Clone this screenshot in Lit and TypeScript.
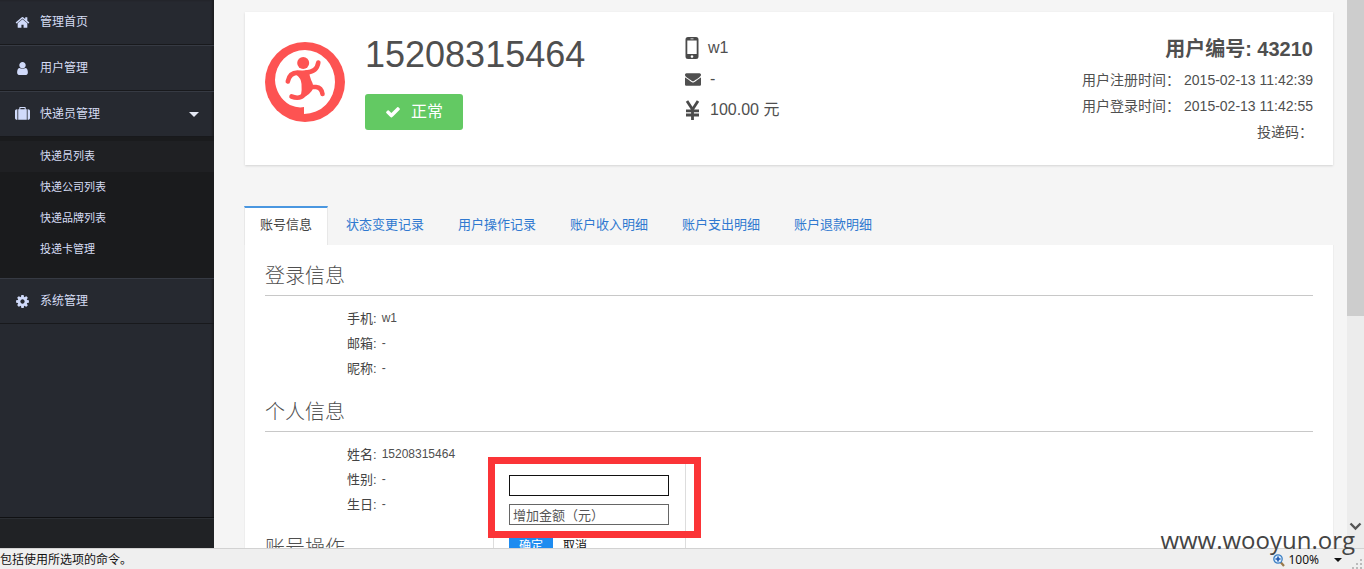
import { LitElement, html, css, svg } from "lit";
import { customElement, property, state } from "lit/decorators.js";

const ICONS: Record<string, string> = {
  home: "M1472 992v480q0 26-19 45t-45 19h-384v-384h-256v384h-384q-26 0-45-19t-19-45v-480q0-1 .5-3t.5-3l575-474 575 474q1 2 1 6zm223-69l-62 74q-8 9-21 11h-3q-13 0-21-7l-692-577-692 577q-12 8-24 7-13-2-21-11l-62-74q-8-10-7-23.5t11-21.5l719-599q32-26 76-26t76 26l244 204v-195q0-14 9-23t23-9h192q14 0 23 9t9 23v408l219 182q10 8 11 21.5t-7 23.5z",
  user: "M1536 1399q0 109-62.5 187t-150.5 78h-854q-88 0-150.5-78t-62.5-187q0-85 8.5-160.5t31.5-152 58.5-131 94-89 134.5-34.5q131 128 313 128t313-128q76 0 134.5 34.5t94 89 58.5 131 31.5 152 8.5 160.5zm-256-887q0 159-112.5 271.5t-271.5 112.5-271.5-112.5-112.5-271.5 112.5-271.5 271.5-112.5 271.5 112.5 112.5 271.5z",
  suitcase: "M640 256h512v-128h-512v128zm-352 0v1280h-64q-92 0-158-66t-66-158v-832q0-92 66-158t158-66h64zm1120 0v1280h-1024v-1280h128v-160q0-40 28-68t68-28h576q40 0 68 28t28 68v160h128zm384 224v832q0 92-66 158t-158 66h-64v-1280h64q92 0 158 66t66 158z",
  cog: "M1152 896q0-106-75-181t-181-75-181 75-75 181 75 181 181 75 181-75 75-181zm512-109v222q0 12-8 23t-20 13l-185 28q-19 54-39 91 35 50 107 138 10 12 10 25t-9 23q-27 37-99 108t-94 71q-12 0-26-9l-138-108q-44 23-91 38-16 136-29 186-7 28-36 28h-222q-14 0-24.5-8.5t-11.5-21.5l-28-184q-49-16-90-37l-141 107q-10 9-25 9-14 0-25-11-126-114-165-168-7-10-7-23 0-12 8-23 15-21 51-66.5t54-70.5q-27-50-41-99l-183-27q-13-2-21-12.5t-8-23.5v-222q0-12 8-23t19-13l186-28q14-46 39-92-40-57-107-138-10-12-10-24 0-10 9-23 26-36 98.5-107.5t94.5-71.5q13 0 26 10l138 107q44-23 91-38 16-136 29-186 7-28 36-28h222q14 0 24.5 8.5t11.5 21.5l28 184q49 16 90 37l142-107q9-9 24-9 13 0 25 10 129 119 165 170 7 8 7 22 0 12-8 23-15 21-51 66.5t-54 70.5q26 50 41 98l183 28q13 2 21 12.5t8 23.5z",
  check: "M1671 566q0 40-28 68l-724 724-136 136q-28 28-68 28t-68-28l-136-136-362-362q-28-28-28-68t28-68l136-136q28-28 68-28t68 28l294 295 656-657q28-28 68-28t68 28l136 136q28 28 28 68z",
  envelope: "M1792 710v794q0 66-47 113t-113 47h-1472q-66 0-113-47t-47-113v-794q44 49 101 87 362 246 497 345 57 42 92.500 65.500t94.500 48 110 24.500h2q51 0 110-24.500t94.500-48 92.500-65.500q170-123 498-345 57-39 100-87zm0-294q0 79-49 151t-122 123q-376 261-468 325-10 7-42.500 30.500t-54 38-52 32.500-57.500 27-50 9h-2q-23 0-50-9t-57.500-27-52-32.500-54-38-42.500-30.500q-91-64-262-182.500t-205-142.500q-62-42-117-115.500t-55-136.500q0-78 41.500-130t118.500-52h1472q65 0 112.500 47t47.500 113z",
};

const fonts = css`"Liberation Sans", "Noto Sans CJK SC", sans-serif`;

function icon(name: string, cls = "icon") {
  return html`<svg class=${cls} viewBox="0 0 1792 1792" aria-hidden="true">
    ${svg`<path fill="currentColor" d=${ICONS[name]}></path>`}
  </svg>`;
}

@customElement("side-nav")
class SideNav extends LitElement {
  static styles = css`
    :host {
      display: flex;
      flex-direction: column;
      background: #262930;
      color: #d5dcf3;
      font: 12px/18px ${fonts};
      box-shadow: inset -2px 0 2px #1d1e21;
    }
    a {
      color: inherit;
      text-decoration: none;
    }
    .item {
      display: flex;
      align-items: center;
      gap: 10px;
      height: 44px;
      padding: 0 15px;
      border-top: 1px solid #363a43;
      border-bottom: 1px solid #18191c;
    }
    .item:first-child {
      border-top: 0;
    }
    .icon {
      width: 15px;
      height: 15px;
      color: #d0dafa;
    }
    .label {
      flex: 1;
    }
    .caret {
      border: 5px solid transparent;
      border-top-color: #e4e8f4;
      border-bottom: 0;
    }
    .sub {
      background: #1a1b1d;
      padding: 4px 0 13px;
      font-size: 11px;
    }
    .sub a {
      display: block;
      padding: 0 40px;
      line-height: 31px;
    }
    .sub a.current {
      background: #1f2023;
    }
    .foot {
      margin-top: auto;
      height: 30px;
      background: #202225;
      border-top: 1px solid #101113;
      box-shadow: inset 0 1px #2b2e33;
    }
  `;

  render() {
    return html`
      <a class="item" href="#">${icon("home")}<span class="label">管理首页</span></a>
      <a class="item" href="#">${icon("user")}<span class="label">用户管理</span></a>
      <a class="item" href="#">
        ${icon("suitcase")}<span class="label">快递员管理</span><span class="caret"></span>
      </a>
      <nav class="sub">
        ${["快递员列表", "快递公司列表", "快递品牌列表", "投递卡管理"].map(
          (t, i) => html`<a class=${i === 0 ? "current" : ""} href="#">${t}</a>`
        )}
      </nav>
      <a class="item" href="#">${icon("cog")}<span class="label">系统管理</span></a>
      <div class="foot"></div>
    `;
  }
}

@customElement("user-card")
class UserCard extends LitElement {
  static styles = css`
    :host {
      display: grid;
      grid-template-columns: 88px 1fr 1fr 1fr;
      column-gap: 12px;
      background: #fff;
      box-shadow: 0 1px 2px #d4d4d4;
      padding: 20px;
      color: #4f4f4f;
      font: 14px/26px ${fonts};
    }
    .logo {
      width: 80px;
      height: 80px;
      margin-top: 10px;
    }
    .phone {
      margin: 0;
      font-size: 36px;
      line-height: 46px;
      font-weight: 400;
    }
    .state {
      display: flex;
      align-items: center;
      gap: 10px;
      height: 36px;
      margin-top: 16px;
      padding: 0 20px;
      border: 0;
      border-radius: 3px;
      background: #63c963;
      color: #fff;
      font: 16px/20px ${fonts};
    }
    .tick {
      width: 16px;
      height: 16px;
    }
    .contact {
      margin: 0;
      padding: 0;
      list-style: none;
      font-size: 16px;
      line-height: 31px;
    }
    .contact li {
      display: flex;
      align-items: center;
      gap: 9px;
    }
    .glyph {
      width: 16px;
      height: 24px;
    }
    .mobile {
      width: 14px;
      height: 24px;
    }
    .facts {
      text-align: right;
    }
    .uid {
      margin: 0;
      padding-bottom: 1px;
      font-size: 20px;
      line-height: 34px;
    }
    .fact {
      display: flex;
      justify-content: flex-end;
      gap: 4px;
      margin: 0;
    }
  `;

  render() {
    return html`
      <svg class="logo" viewBox="0 0 80 80" aria-hidden="true">
        <circle cx="40" cy="40" r="40" fill="#fd5352" />
        <path d="M39 72 V65 Q33 66.500 25 63 A30 30 0 0 1 10 38 A30 30 0 0 1 40 8 A30.500 31.500 0 0 1 70 40 A31 32 0 0 1 39 72Z" fill="#fff" />
        <g fill="none" stroke="#fd5352" stroke-width="4.600" stroke-linecap="round" stroke-linejoin="round">
          <path d="M41 30.500 Q52 30 53.300 20.500" />
          <path d="M36 31 Q25 29 22.800 39.500" />
          <path d="M44 45 H51 Q56.500 45.500 57.500 52" />
          <path d="M42 47 Q38 59 26.500 54.500" />
        </g>
        <path d="M31.500 29 L44 28 Q44 34 47.500 41 Q50 47 44 52 Q38 57 36 53 Q37 48 36.500 42 Q36 36 31.500 33Z" fill="#fd5352" />
        <circle cx="38.200" cy="21" r="6" fill="#fd5352" />
      </svg>
      <div>
        <h1 class="phone">15208315464</h1>
        <button class="state" type="button">${icon("check", "tick")}正常</button>
      </div>
      <ul class="contact">
        <li>
          <svg class="mobile" viewBox="0 0 14 24" aria-hidden="true">
            <path fill="#4a4a4a" fill-rule="evenodd" d="M3 1h8a2.500 2.500 0 0 1 2.500 2.500v17A2.500 2.500 0 0 1 11 23H3a2.500 2.500 0 0 1-2.500-2.500v-17A2.500 2.500 0 0 1 3 1zM2.300 4.500v13.500h9.400V4.500zM5.500 2.400v.8h3v-.8zM7 19.200a1.300 1.300 0 1 0 .01 0z" />
          </svg>w1
        </li>
        <li>${icon("envelope", "glyph")}-</li>
        <li>
          <svg class="glyph" viewBox="0 0 16 24" aria-hidden="true">
            <path fill="none" stroke="#4a4a4a" stroke-width="2.800" d="M2 3 L7.500 11.500 L13 3 M7.500 11 V22 M1 12.800 H14 M1 17 H14" />
          </svg>100.00 元
        </li>
      </ul>
      <div class="facts">
        <h2 class="uid">用户编号: 43210</h2>
        <p class="fact"><span>用户注册时间：</span><span>2015-02-13 11:42:39</span></p>
        <p class="fact"><span>用户登录时间：</span><span>2015-02-13 11:42:55</span></p>
        <p class="fact"><span>投递码：</span></p>
      </div>
    `;
  }
}

@customElement("info-section")
class InfoSection extends LitElement {
  @property() heading = "";
  @property({ attribute: false }) rows: [string, string][] = [];

  static styles = css`
    :host {
      display: block;
      color: #4f4f4f;
      font: 12px/25px ${fonts};
    }
    .title {
      margin: 0;
      padding-top: 2px;
      font-size: 20px;
      line-height: 38px;
      font-weight: 300;
      border-bottom: 1px solid #c8c8c8;
    }
    .list {
      margin: 0;
      padding: 10px 0;
    }
    .row {
      display: flex;
      gap: 5px;
      padding-left: 82px;
    }
    dt {
      font-size: 13px;
      color: #444;
    }
    dd {
      margin: 0;
    }
  `;

  render() {
    return html`
      <h3 class="title">${this.heading}</h3>
      <dl class="list">
        ${this.rows.map(([k, v]) => html`<div class="row"><dt>${k}:</dt><dd>${v}</dd></div>`)}
      </dl>
    `;
  }
}

@customElement("amount-popup")
class AmountPopup extends LitElement {
  static styles = css`
    :host {
      display: block;
      box-sizing: border-box;
      width: 193px;
      padding: 14px 15px;
      background: #fff;
      border: 1px solid #ddd;
      font: 13px/18px ${fonts};
    }
    .field {
      display: block;
      box-sizing: border-box;
      width: 160px;
      height: 21px;
      margin: 0 0 8px;
      padding: 2px 3px 0;
      border: 1px solid #666;
      background: #fff;
      font: inherit;
      color: #333;
      outline: 0;
    }
    .active {
      border-color: #111;
    }
    .field::placeholder {
      color: #555;
      opacity: 1;
    }
    .actions {
      display: flex;
    }
    .btn {
      border: 0;
      height: 26px;
      padding: 0 10px;
      background: none;
      font: 12px/18px ${fonts};
      color: #111;
    }
    .ok {
      background: #1e8cf0;
      color: #fff;
    }
  `;

  render() {
    return html`
      <input class="field active" type="text" aria-label="账号" />
      <input class="field" type="text" aria-label="增加金额（元）" placeholder="增加金额（元）" />
      <div class="actions">
        <button class="btn ok" type="button">确定</button>
        <button class="btn" type="button">取消</button>
      </div>
    `;
  }
}

@customElement("app-root")
class AppRoot extends LitElement {
  @state() private active = 0;

  private tabs = ["账号信息", "状态变更记录", "用户操作记录", "账户收入明细", "账户支出明细", "账户退款明细"];

  static styles = css`
    :host {
      display: grid;
      grid-template-rows: minmax(0, 1fr) auto;
      height: 100vh;
      position: relative;
      overflow: hidden;
      background: #f5f5f5;
      font: 13px/18px ${fonts};
    }
    .window {
      display: grid;
      grid-template-columns: 214px minmax(0, 1fr) 17px;
      overflow: hidden;
    }
    .content {
      padding: 12px 14px 0 31px;
      overflow: hidden;
    }
    .tabs {
      display: flex;
      gap: 2px;
      margin: 41px 0 0 -1px;
    }
    .tab {
      padding: 0 15px 4px;
      border: 1px solid transparent;
      border-top-width: 2px;
      border-bottom: 0;
      line-height: 33px;
      color: #3079d0;
      text-decoration: none;
    }
    .tab.on {
      background: #fff;
      border-color: #4a97e0 #e8e8e8;
      color: #444;
    }
    .panel {
      position: relative;
      background: #fff;
      padding: 10px 20px;
      box-shadow: 0 0 1px #ccc;
      clip-path: inset(0 -2px -2px -2px);
    }
    .popup {
      position: absolute;
      left: 248px;
      top: 215px;
    }
    .frame {
      position: absolute;
      left: 243px;
      top: 212px;
      width: 199px;
      height: 67px;
      border: 7px solid #fb3437;
      pointer-events: none;
    }
    .scroll {
      display: flex;
      flex-direction: column;
      justify-content: space-between;
      background: #ececec;
    }
    .thumb {
      height: 316px;
      background: #cdcdcd;
    }
    .down {
      width: 13px;
      height: 9px;
      margin: 0 2px 17px;
    }
    .status {
      display: flex;
      align-items: center;
      height: 18px;
      padding-top: 2px;
      background: #efefef;
      border-top: 1px solid #d2d2d2;
      color: #111;
      font-size: 12px;
    }
    .message {
      flex: 1;
    }
    .zoom {
      display: flex;
      align-items: center;
      gap: 3px;
      font-family: "Noto Sans", sans-serif;
      font-size: 12px;
    }
    .lens {
      width: 12px;
      height: 13px;
    }
    .arrow {
      margin: 0 10px 0 15px;
      border: 4px solid transparent;
      border-top-color: #111;
      border-bottom: 0;
    }
    .grip {
      width: 10px;
      height: 10px;
      margin: 8px 2px 0 0;
    }
    .mark {
      position: absolute;
      right: 9px;
      bottom: 9px;
      font: 24px/40px "Open Sans", sans-serif;
      color: #444;
    }
  `;

  render() {
    return html`
      <div class="window">
        <side-nav></side-nav>
        <main class="content">
          <user-card></user-card>
          <nav class="tabs">
            ${this.tabs.map(
              (t, i) => html`<a
                class=${i === this.active ? "tab on" : "tab"}
                href="#"
                @click=${(e: Event) => {
                  e.preventDefault();
                  this.active = i;
                }}
                >${t}</a
              >`
            )}
          </nav>
          <section class="panel">
            <info-section heading="登录信息" .rows=${[["手机", "w1"], ["邮箱", "-"], ["昵称", "-"]]}></info-section>
            <info-section heading="个人信息" .rows=${[["姓名", "15208315464"], ["性别", "-"], ["生日", "-"]]}></info-section>
            <info-section heading="账号操作"></info-section>
            <amount-popup class="popup"></amount-popup>
            <div class="frame"></div>
          </section>
        </main>
        <div class="scroll">
          <div class="thumb"></div>
          <svg class="down" viewBox="0 0 13 9" aria-hidden="true">
            <path d="M1.500 1.500 L6.500 6.500 L11.500 1.500" fill="none" stroke="#555" stroke-width="2.400" />
          </svg>
        </div>
      </div>
      <footer class="status">
        <span class="message">包括使用所选项的命令。</span>
        <span class="zoom">
          <svg class="lens" viewBox="0 0 12 13" aria-hidden="true">
            <path d="M7.500 8 L11 12" stroke="#9a7a4a" stroke-width="2.200" />
            <circle cx="5" cy="5" r="4.200" fill="#d9ecfb" stroke="#3b7fc4" stroke-width="1.300" />
            <path d="M5 2.500 V7.500 M2.500 5 H7.500" stroke="#1c55b0" stroke-width="1.600" />
          </svg>
          100%
        </span>
        <span class="arrow"></span>
        <svg class="grip" viewBox="0 0 10 10" aria-hidden="true">
          <path d="M8 0h2v2h-2zM8 4h2v2h-2zM8 8h2v2h-2zM4 4h2v2h-2zM4 8h2v2h-2zM0 8h2v2h-2z" fill="#bbb" />
        </svg>
      </footer>
      <div class="mark">www.wooyun.org</div>
    `;
  }
}
